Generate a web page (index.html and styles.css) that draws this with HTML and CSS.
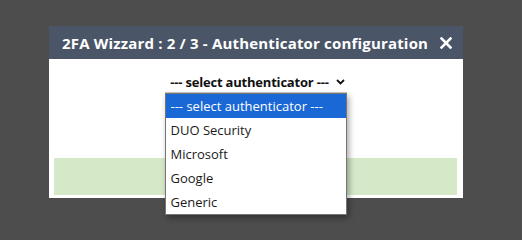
FILE: index.html
```html
<!doctype html>
<html><head>
  <meta charset="utf-8">
  <title>2FA Wizzard</title>
  <link rel="stylesheet" href="styles.css">
</head><body>
  <div class="dialog">
    <div class="dialog-head">
      <span class="dialog-title">2FA Wizzard : 2 / 3 - Authenticator configuration</span>
      <svg class="dialog-close" width="12" height="12" viewBox="0 0 12 12">
        <path d="M1.5 1.5 L10.5 10.5 M10.5 1.5 L1.5 10.5" stroke="#fff" stroke-width="2.6" stroke-linecap="square"/>
      </svg>
    </div>
    <div class="dialog-body">
      <div class="picker">
        <div class="picker-value">
          --- select authenticator ---
          <svg class="picker-arrow" width="9" height="6" viewBox="0 0 9 6">
            <path d="M1 1 L4.5 4.5 L8 1" fill="none" stroke="#111" stroke-width="1.8"/>
          </svg>
        </div>
        <ul class="picker-list">
          <li class="picked">--- select authenticator ---</li>
          <li>DUO Security</li>
          <li>Microsoft</li>
          <li>Google</li>
          <li>Generic</li>
        </ul>
      </div>
      <div class="notice"></div>
    </div>
  </div>
</body></html>
```

FILE: styles.css
```css
html, body {
	min-height: 100%;
}

body {
	margin: 0;
	padding-top: 26px;
	box-sizing: border-box;
	height: 240px;
	background: #4d4d4d;
	font-family: "Open Sans", sans-serif;
}

.dialog {
	width: 414px;
	margin-left: 49px;
	background: #fff;
}

.dialog-head {
	height: 33px;
	background: #4a5568;
	display: flex;
	align-items: center;
	padding: 0 11px 0 13px;
}

.dialog-title {
	flex: 1;
	color: #fff;
	font-weight: bold;
	font-size: 15px;
	letter-spacing: 0.18px;
}

.dialog-close {
	display: block;
}

.dialog-body {
	padding: 14px 6px 3px 5px;
}

.picker {
	position: relative;
	width: 182px;
	margin: 0 auto;
	z-index: 2;
}

.picker-value {
	height: 18px;
	display: flex;
	align-items: center;
	justify-content: center;
	gap: 7px;
	font-size: 13px;
	font-weight: bold;
	letter-spacing: -0.2px;
	color: #111;
	border-bottom: 1px solid #c8c8c8;
	padding: 0 0 1px 4px;
}

.picker-list {
	position: absolute;
	top: 20px;
	left: 0;
	width: 180px;
	margin: 0;
	padding: 0;
	list-style: none;
	background: #fff;
	border: 1px solid #767676;
	box-shadow: 2px 3px 6px rgba(0, 0, 0, 0.35);
}

.picker-list li {
	height: 24px;
	line-height: 24px;
	padding-left: 5px;
	font-size: 13px;
	color: #1a1a1a;
}

.picker-list .picked {
	background: #1a68d6;
	color: #fff;
}

.notice {
	height: 37px;
	margin-top: 65px;
	background: #d5e8c8;
}
```
